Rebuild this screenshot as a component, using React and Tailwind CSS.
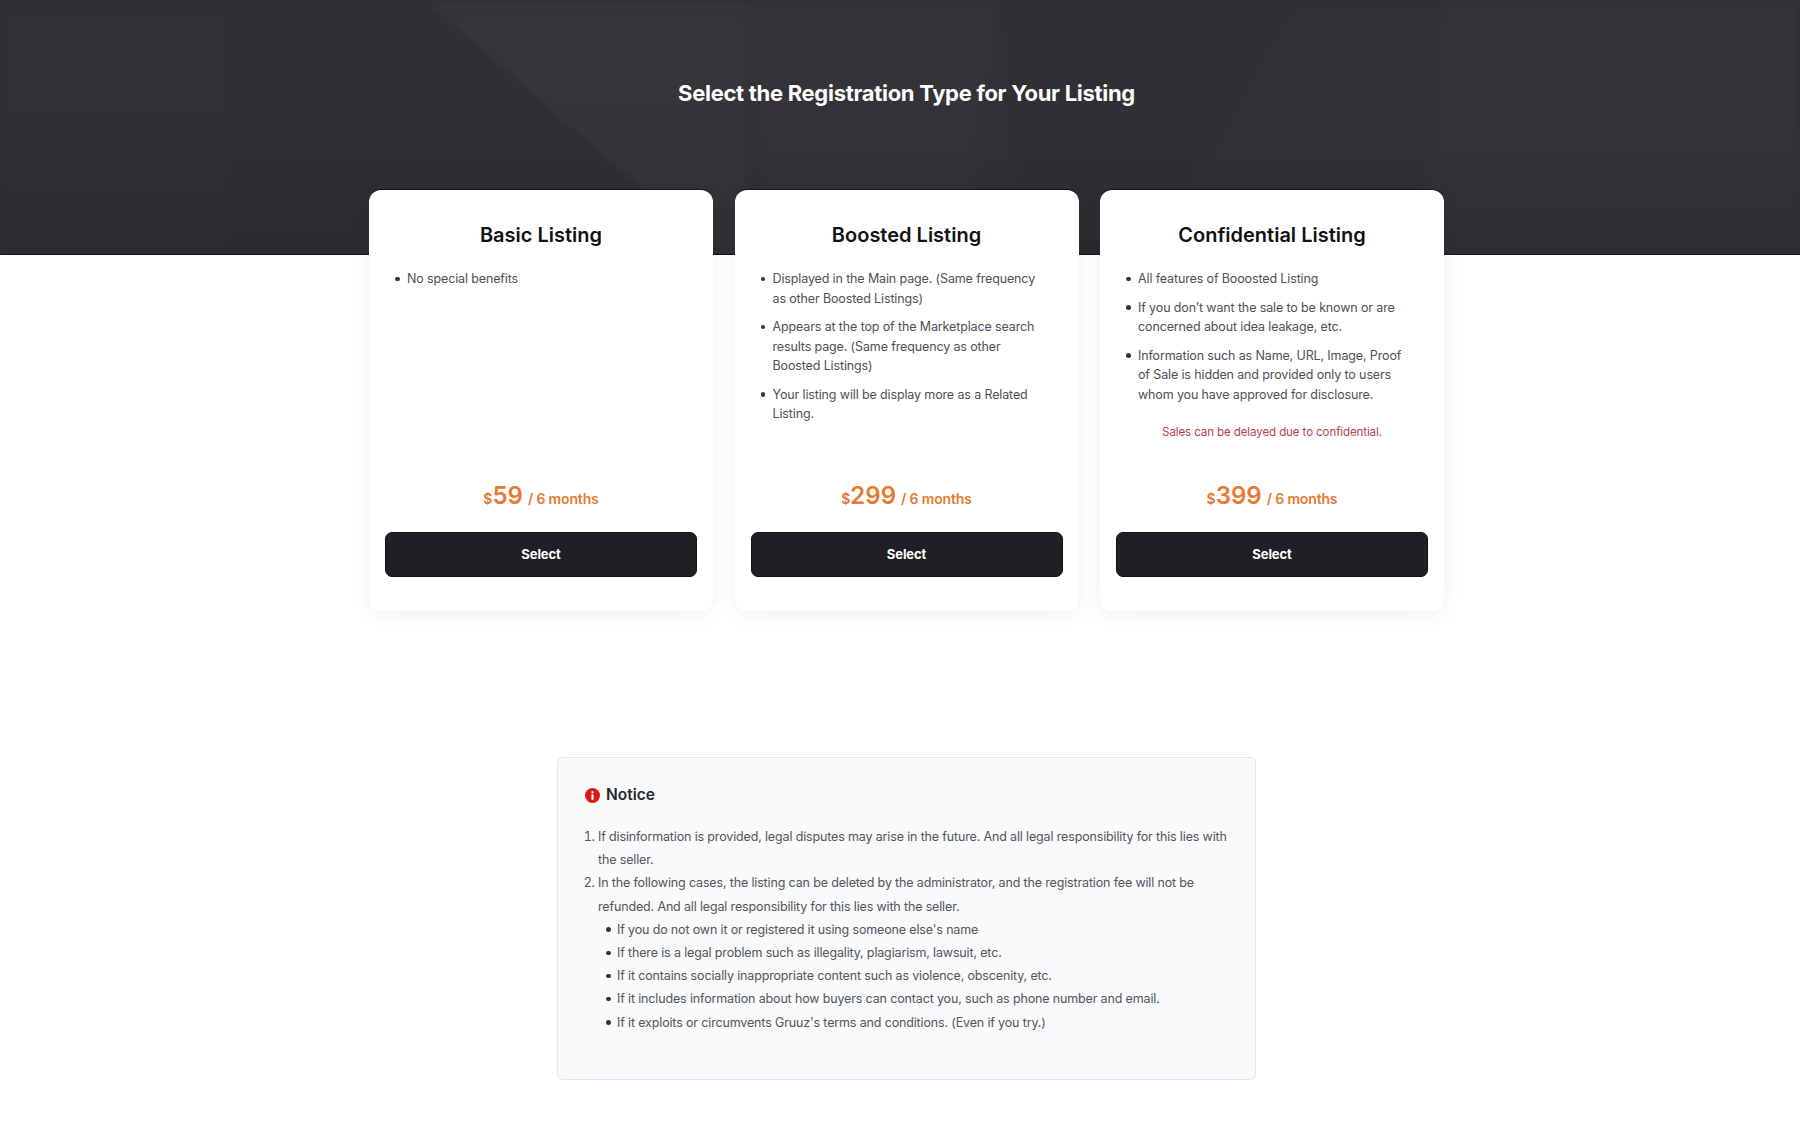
const F = "font-['Inter','Noto_Sans',sans-serif]";

function HeroBg() {
  return (
    <svg className="absolute inset-0 h-full w-full blur-[3px]" viewBox="0 0 1800 255" preserveAspectRatio="none" aria-hidden="true">
      <defs>
        <linearGradient id="fade" x1="0" y1="0" x2="0" y2="1">
          <stop offset="0" stopColor="#ffffff" stopOpacity="0.012" />
          <stop offset="1" stopColor="#000000" stopOpacity="0.05" />
        </linearGradient>
      </defs>
      <rect width="1800" height="255" fill="#2e2e33" />
      <polygon points="0,0 225,0 225,255 0,255" fill="#2d2d32" />
      <polygon points="225,0 425,0 718,255 225,255" fill="#2c2c31" />
      <polygon points="425,0 745,0 745,255 718,255" fill="#323237" />
      <polygon points="745,0 1000,0 960,255 770,255" fill="#303035" />
      <polygon points="1000,0 1300,0 1150,255 1025,255" fill="#2c2c31" />
      <polygon points="1300,0 1445,0 1420,255 1150,255" fill="#2e2e33" />
      <polygon points="1445,0 1800,0 1800,255 1420,255" fill="#303035" />
      <rect width="1800" height="255" fill="url(#fade)" />
    </svg>
  );
}

const dot = "relative before:absolute before:size-[4.5px] before:rounded-full before:bg-[#333338]";

function Bullets({ items }) {
  return (
    <ul className="flex flex-col gap-[9px] pl-[22px] pr-[20px] text-[12.5px] leading-[19.5px] tracking-[-0.13px] text-[#505055]">
      {items.map((t) => (
        <li key={t} className={`${dot} before:left-[-12px] before:top-[7.5px]`}>{t}</li>
      ))}
    </ul>
  );
}

function Card({ title, items, note, price }) {
  return (
    <div className="flex h-[421px] flex-col rounded-[12px] bg-white px-[16px] pb-[34px] pt-[30px] shadow-[0_4px_20px_rgba(0,0,0,0.06),0_-1px_0_rgba(0,0,0,0.5)]">
      <h2 className="text-center text-[20px] font-semibold leading-[30px] text-[#111114]">{title}</h2>
      <div className="mt-[19px] flex-1">
        <Bullets items={items} />
        {note && <p className="mt-[19px] text-center text-[11.6px] leading-[18px] tracking-[-0.13px] text-[#b5434c]">{note}</p>}
      </div>
      <p className="pt-[3px] text-center font-semibold leading-[30px] text-[#e57a30]">
        <span className="text-[14px]">$</span>
        <span className="text-[24px]">{price}</span>
        <span className="ml-[5px] text-[14px] tracking-[-0.15px]">/ 6 months</span>
      </p>
      <button className="mt-[18px] h-[45px] w-full rounded-[7px] border border-[#111] bg-[#202024] text-[13px] font-bold tracking-[-0.1px] text-white">
        Select
      </button>
    </div>
  );
}

export default function App() {
  return (
    <div className={`${F} min-h-[1132px] bg-white`}>
      <header className="relative h-[255px] overflow-hidden border-b border-[#16161a] bg-[#2d2d32]">
        <HeroBg />
        <h1 className="relative ml-[13px] pt-[76px] text-center text-[22px] font-bold leading-[34px] tracking-[-0.3px] text-white">
          Select the Registration Type for Your Listing
        </h1>
      </header>
      <main className="relative ml-[369px] mt-[-65px] grid w-[1075px] grid-cols-3 gap-[21.5px]">
        <Card title="Basic Listing" price="59" items={["No special benefits"]} />
        <Card
          title="Boosted Listing"
          price="299"
          items={[
            "Displayed in the Main page. (Same frequency as other Boosted Listings)",
            "Appears at the top of the Marketplace search results page. (Same frequency as other Boosted Listings)",
            "Your listing will be display more as a Related Listing.",
          ]}
        />
        <Card
          title="Confidential Listing"
          price="399"
          items={[
            "All features of Booosted Listing",
            "If you don’t want the sale to be known or are concerned about idea leakage, etc.",
            "Information such as Name, URL, Image, Proof of Sale is hidden and provided only to users whom you have approved for disclosure.",
          ]}
          note="Sales can be delayed due to confidential."
        />
      </main>
      <section className="ml-[557px] mt-[146px] h-[323px] w-[699px] rounded-[6px] border border-[#e3e6ea] bg-[#f8fafc] pl-[27px] pr-[22px] pt-[25px]">
        <div className="flex items-center gap-[6px]">
          <svg width="15" height="15" viewBox="0 0 16 16" aria-hidden="true">
            <circle cx="8" cy="8" r="8" fill="#d91a1a" />
            <circle cx="8" cy="4.4" r="1.2" fill="#fff" />
            <rect x="6.9" y="6.6" width="2.2" height="6" rx="0.4" fill="#fff" />
          </svg>
          <h3 className="text-[15.5px] font-semibold leading-[24px] text-[#27272a]">Notice</h3>
        </div>
        <ol className="mt-[18px] list-decimal pl-[13px] text-[12.5px] leading-[23.2px] tracking-[-0.15px] text-[#55555a]">
          <li>
            If disinformation is provided, legal disputes may arise in the future. And all legal responsibility for this lies with the seller.
          </li>
          <li>
            In the following cases, the listing can be deleted by the administrator, and the registration fee will not be refunded. And all legal responsibility for this lies with the seller.
            <ul className="pl-[19px]">
              {[
                "If you do not own it or registered it using someone else's name",
                "If there is a legal problem such as illegality, plagiarism, lawsuit, etc.",
                "If it contains socially inappropriate content such as violence, obscenity, etc.",
                "If it includes information about how buyers can contact you, such as phone number and email.",
                "If it exploits or circumvents Gruuz's terms and conditions. (Even if you try.)",
              ].map((t) => (
                <li key={t} className={`${dot} before:left-[-11px] before:top-[9.5px]`}>{t}</li>
              ))}
            </ul>
          </li>
        </ol>
      </section>
    </div>
  );
}
